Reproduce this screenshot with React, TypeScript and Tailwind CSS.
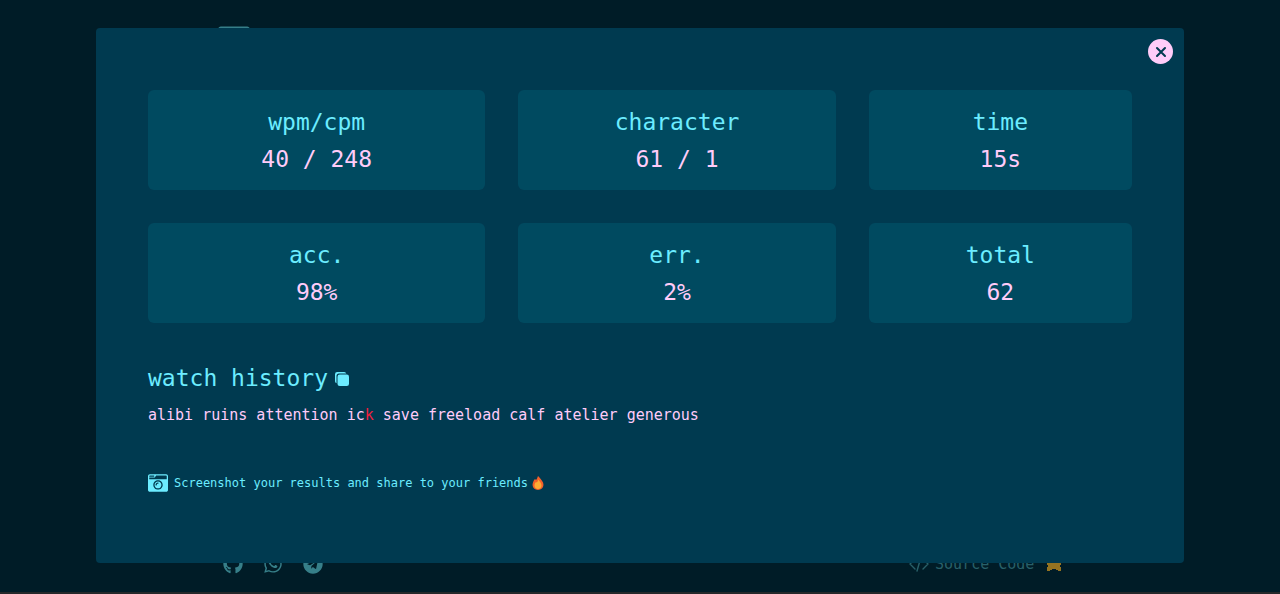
import { FaCameraRetro, FaGithub, FaWhatsapp, FaTelegram, FaKeyboard } from "react-icons/fa";
import { IoCopy, IoSettingsSharp } from "react-icons/io5";

const stats = [
  { label: "wpm/cpm", value: "40 / 248" },
  { label: "character", value: "61 / 1" },
  { label: "time", value: "15s" },
  { label: "acc.", value: "98%" },
  { label: "err.", value: "2%" },
  { label: "total", value: "62" },
];

function Flame() {
  return (
    <svg viewBox="0 0 24 28" className="h-[14px] w-3" aria-hidden="true">
      <path d="M12 0c3 3 8 8 10 13 3 8-2 15-10 15S-1 21 2 13c1-3 2-5 4-7l2 2c2-2 3-5 4-8z" fill="#f4602b" />
      <path d="M12 7c3 3 7 7 7 12 0 4-3 7-7 7s-7-3-7-7c0-3 1-5 3-7l1 1c2-1 3-3 3-6z" fill="#ffab33" />
    </svg>
  );
}

function Cross() {
  return (
    <svg viewBox="0 0 16 16" className="size-4" fill="none" stroke="currentColor" strokeWidth="2" strokeLinecap="round" aria-hidden="true">
      <path d="M4 4l8 8M12 4l-8 8" />
    </svg>
  );
}

function CodeIcon() {
  return (
    <svg viewBox="0 0 20 20" className="mr-1.5 size-5" fill="none" stroke="currentColor" strokeWidth="1.4" strokeLinecap="round" strokeLinejoin="round" aria-hidden="true">
      <path d="M6 5l-5 5 5 5M14 5l5 5-5 5M12 3L8 17" />
    </svg>
  );
}

function Star() {
  return (
    <svg viewBox="0 0 16 16" className="ml-3 size-4 text-[#947321]" fill="currentColor" aria-hidden="true">
      <path d="M7 0h2v2h1v3h6v2h-1v2h-1v2h1v4h-3v-1h-2v-1H6v1H4v1H1v-4h1V9H1V7H0V5h6V2h1z" />
    </svg>
  );
}

function Backdrop() {
  return (
    <div className="flex min-h-screen flex-col justify-between border-b-2 border-[#25282a] px-[17%] pt-[23px] pb-[18px] text-[#367f89]">
      <header className="flex items-start justify-between">
        <a href="#home" aria-label="Home">
          <FaKeyboard className="h-7 w-8" />
        </a>
        <button type="button" aria-label="Settings" className="mt-1">
          <IoSettingsSharp className="size-5" />
        </button>
      </header>
      <footer className="flex items-center justify-between pl-[5px]">
        <nav className="flex gap-5" aria-label="Social">
          <a href="#github" aria-label="GitHub"><FaGithub className="size-5" /></a>
          <a href="#whatsapp" aria-label="WhatsApp"><FaWhatsapp className="size-5" /></a>
          <a href="#telegram" aria-label="Telegram"><FaTelegram className="size-5" /></a>
        </nav>
        <a href="#source" className="flex items-center text-[15px] leading-5 text-[#286069]">
          <CodeIcon />
          Source Code
          <Star />
        </a>
      </footer>
    </div>
  );
}

export default function App() {
  return (
    <div className="relative min-h-screen bg-[#001c27] font-['DejaVu_Sans_Mono',monospace]">
      <Backdrop />
      <div className="absolute inset-0 px-[7.5%] pt-7 pb-[31px]">
        <section
          role="dialog"
          aria-label="Results"
          className="relative min-h-full rounded bg-[#003a50] px-[52px] pt-[62px] pb-[67px] text-[#6cecff]"
        >
          <button
            type="button"
            aria-label="Close"
            className="absolute top-[11px] right-[11px] flex size-[25px] items-center justify-center rounded-full bg-[#ffccf9] text-[#003a50]"
          >
            <Cross />
          </button>

          <dl className="grid grid-cols-[337fr_317fr_263fr] gap-[33px] text-center text-[23px] leading-[37px]">
            {stats.map((s) => (
              <div key={s.label} className="rounded-md bg-[#004a60] pt-[14px] pb-3">
                <dt>{s.label}</dt>
                <dd className="text-[#ffccf9]">{s.value}</dd>
              </div>
            ))}
          </dl>

          <div className="mt-[37px] flex items-center gap-1.5">
            <h2 className="text-[23px] leading-[37px]">watch history</h2>
            <button type="button" aria-label="Copy history">
              <IoCopy className="size-4" />
            </button>
          </div>
          <p className="text-[15px] leading-[37px] text-[#ffccf9]">
            alibi ruins attention ic<span className="text-[#f01f3c]">k</span> save freeload calf atelier generous
          </p>

          <p className="mt-[39px] flex items-center text-[12px] leading-5">
            <FaCameraRetro className="mr-1.5 size-5" />
            Screenshot your results and share to your friends
            <span className="ml-1"><Flame /></span>
          </p>
        </section>
      </div>
    </div>
  );
}
